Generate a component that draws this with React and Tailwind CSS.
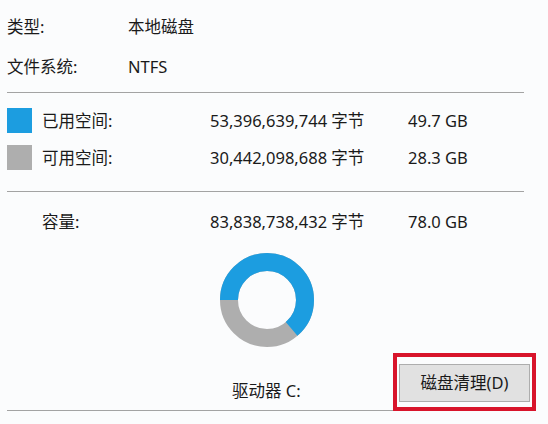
import React from 'react';

const FONT = { fontFamily: '"Noto Sans", "Noto Sans CJK SC", sans-serif' };

const used = 53396639744;
const total = 83838738432;

function Donut() {
  const r = 38;
  const c = 2 * Math.PI * r;
  const dash = (used / total) * c;
  return (
    <svg width="94" height="94" viewBox="0 0 94 94">
      <circle cx="47" cy="47" r={r} fill="none" stroke="#aeaeae" strokeWidth="18" />
      <circle
        cx="47"
        cy="47"
        r={r}
        fill="none"
        stroke="#1c9de0"
        strokeWidth="18"
        strokeDasharray={`${dash} ${c}`}
        transform="rotate(180 47 47)"
      />
    </svg>
  );
}

function SpaceRow({ color, label, bytes, size, className = '' }) {
  return (
    <div className={`flex items-center h-[25px] ${className}`}>
      <div className="w-[25px] h-[25px] shrink-0" style={{ backgroundColor: color }} />
      <span className="w-[168px] ml-[10px]">{label}</span>
      <span className="w-[198px]">{bytes}</span>
      <span>{size}</span>
    </div>
  );
}

export default function App() {
  return (
    <div
      className="w-[548px] h-[424px] bg-[#fbfcfd] text-[#1a1a1a] text-[16.5px] leading-[20px] px-[7px] pt-[17px] overflow-hidden"
      style={FONT}
    >
      <div className="flex h-[20px]">
        <span className="w-[121px]">类型:</span>
        <span>本地磁盘</span>
      </div>
      <div className="flex h-[20px] mt-[20px]">
        <span className="w-[121px]">文件系统:</span>
        <span>NTFS</span>
      </div>

      <div className="w-[517px] border-t border-[#a3a3a3] mt-[15px]" />

      <SpaceRow color="#1c9de0" label="已用空间:" bytes="53,396,639,744 字节" size="49.7 GB" className="mt-[15px]" />
      <SpaceRow color="#aeaeae" label="可用空间:" bytes="30,442,098,688 字节" size="28.3 GB" className="mt-[12px]" />

      <div className="w-[517px] border-t border-[#a3a3a3] mt-[21px]" />

      <div className="flex h-[20px] mt-[20px]">
        <span className="w-[168px] ml-[35px]">容量:</span>
        <span className="w-[198px]">83,838,738,432 字节</span>
        <span>78.0 GB</span>
      </div>

      <div className="flex mt-[21px] pl-[213px]">
        <Donut />
      </div>

      <div className="flex items-end h-[58px] mt-[6px]">
        <div className="w-[386px] h-full border-b border-[#a3a3a3] pt-[28px] pl-[225px]">
          驱动器 C:
        </div>
        <div className="w-[143px] h-[58px] border-4 border-[#d8142b] px-[2px] pt-[7px] pb-[5px]">
          <button className="w-full h-full bg-[#e1e1e1] border border-[#adadad] text-[16.5px] text-[#1a1a1a] flex items-center justify-center">
            磁盘清理(D)
          </button>
        </div>
      </div>
    </div>
  );
}
